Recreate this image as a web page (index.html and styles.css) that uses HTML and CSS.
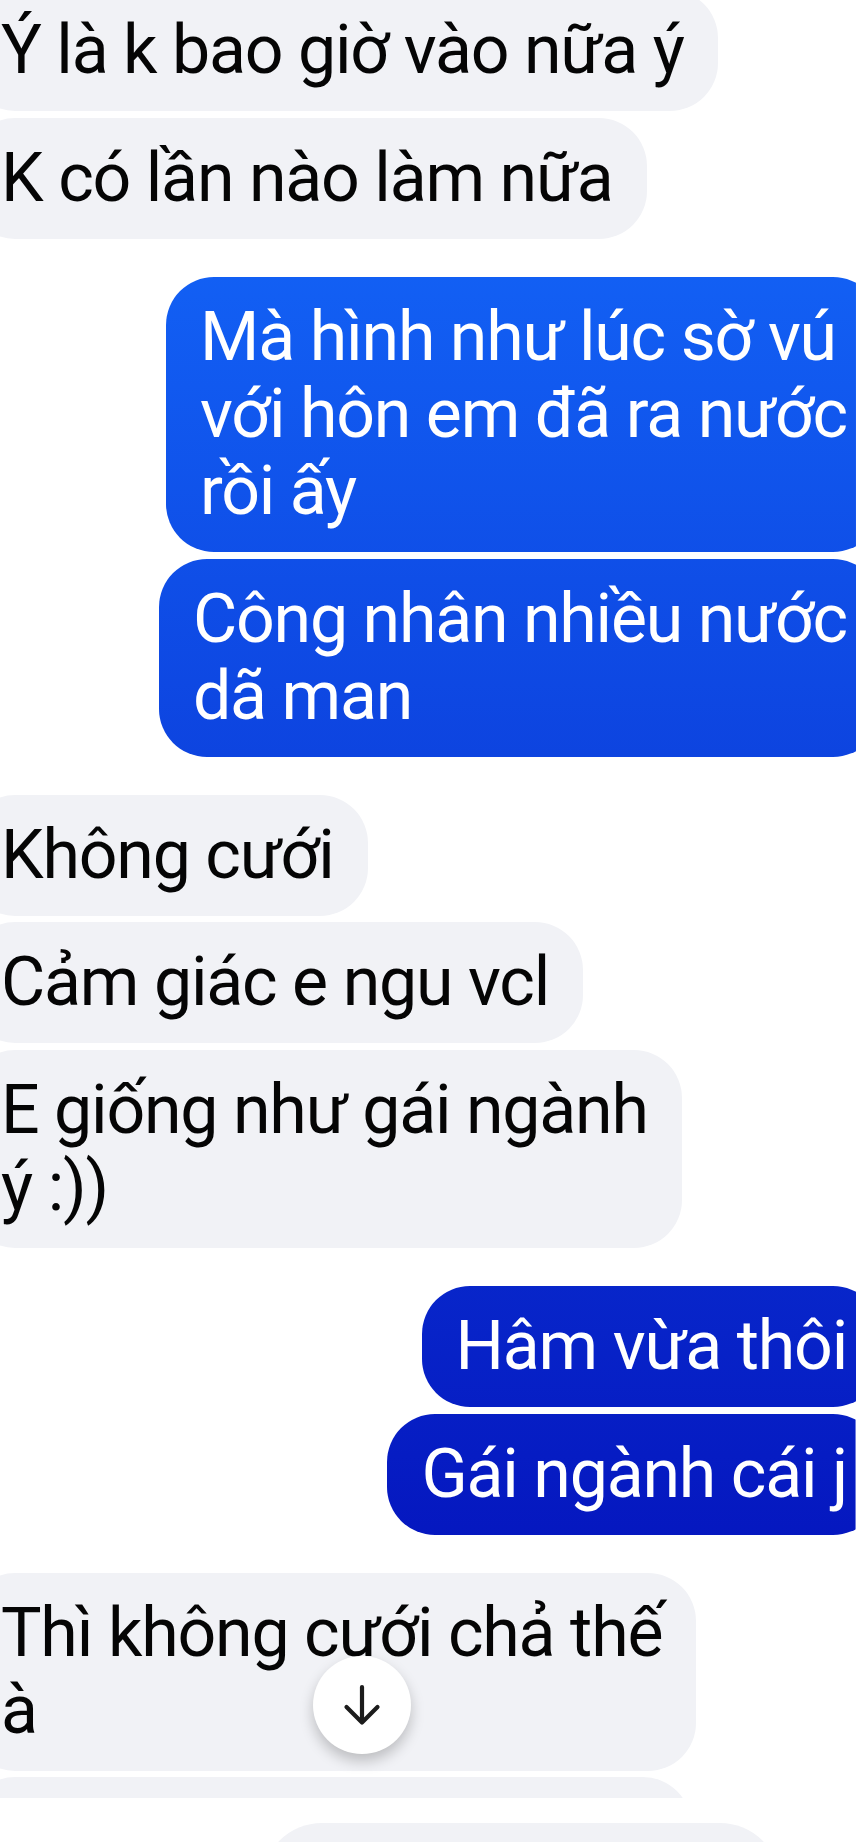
FILE: index.html
```html
<!DOCTYPE html>
<html lang="vi">
<head>
<meta charset="utf-8">
<title>Messenger</title>
<link rel="stylesheet" href="styles.css">
</head>
<body>
<main class="thread">
  <section class="group received">
    <div class="bubble">Ý là k bao giờ vào nữa ý</div>
    <div class="bubble">K có lần nào làm nữa</div>
  </section>
  <section class="group sent">
    <div class="bubble">Mà hình như lúc sờ vú<br>với hôn em đã ra nước<br>rồi ấy</div>
    <div class="bubble">Công nhân nhiều nước<br>dã man</div>
  </section>
  <section class="group received">
    <div class="bubble">Không cưới</div>
    <div class="bubble">Cảm giác e ngu vcl</div>
    <div class="bubble">E giống như gái ngành<br>ý :))</div>
  </section>
  <section class="group sent">
    <div class="bubble">Hâm vừa thôi</div>
    <div class="bubble">Gái ngành cái j</div>
  </section>
  <section class="group received">
    <div class="bubble">Thì không cưới chả thế<br>à</div>
    <div class="bubble bubble-partial"></div>
  </section>
</main>

<button class="scroll-down" aria-label="Cuộn xuống">
  <svg viewBox="0 0 48 48" width="48" height="48" aria-hidden="true">
    <path d="M24 6 V41 M8.5 26 L24 41.5 L39.5 26" fill="none" stroke="#1c1c1c" stroke-width="4.2" stroke-linecap="round" stroke-linejoin="round"/>
  </svg>
</button>

<footer class="composer">
  <div class="composer-field"></div>
</footer>
</body>
</html>
```

FILE: styles.css
```css
html, body {
  margin: 0;
  padding: 0;
  height: 1842px;
  overflow: hidden;
  background: #ffffff;
}

body {
  position: relative;
  font-family: Roboto, "Noto Sans", "Liberation Sans", sans-serif;
  font-size: 68px;
  line-height: 77px;
  letter-spacing: -1.2px;
  color: #050505;
}

.thread {
  margin-left: -33px;
  margin-top: -9.7px;
  width: 914px;
  display: flex;
  flex-direction: column;
  gap: 38.6px;
}

.group {
  display: flex;
  flex-direction: column;
  gap: 6.3px;
}

.group.received {
  align-items: flex-start;
}

.group.sent {
  align-items: flex-end;
}

.bubble {
  box-sizing: border-box;
  max-width: 756px;
  padding: 22px 34px;
  border-radius: 48px;
  white-space: nowrap;
}

.received .bubble {
  background: #f1f2f6;
  color: #050505;
}

.sent .bubble {
  color: #ffffff;
  background-image: linear-gradient(to bottom, rgb(21, 111, 255) 0px, rgb(2, 6, 179) 1842px);
  background-attachment: fixed;
  background-size: 100% 1842px;
}

.bubble-partial {
  width: 724px;
  height: 121px;
}

.scroll-down {
  position: absolute;
  left: 313px;
  top: 1656px;
  width: 98px;
  height: 98px;
  padding: 0;
  border: none;
  border-radius: 50%;
  background: #ffffff;
  box-shadow: 0 7px 14px rgba(0, 0, 0, 0.22);
  display: flex;
  align-items: center;
  justify-content: center;
}

.composer {
  position: absolute;
  left: 0;
  right: 0;
  top: 1797.7px;
  bottom: 0;
  background: #ffffff;
  overflow: hidden;
}

.composer-field {
  margin-top: 25px;
  margin-left: 262px;
  width: 518px;
  height: 120px;
  border-radius: 60px;
  background: #f1f2f6;
}
```
